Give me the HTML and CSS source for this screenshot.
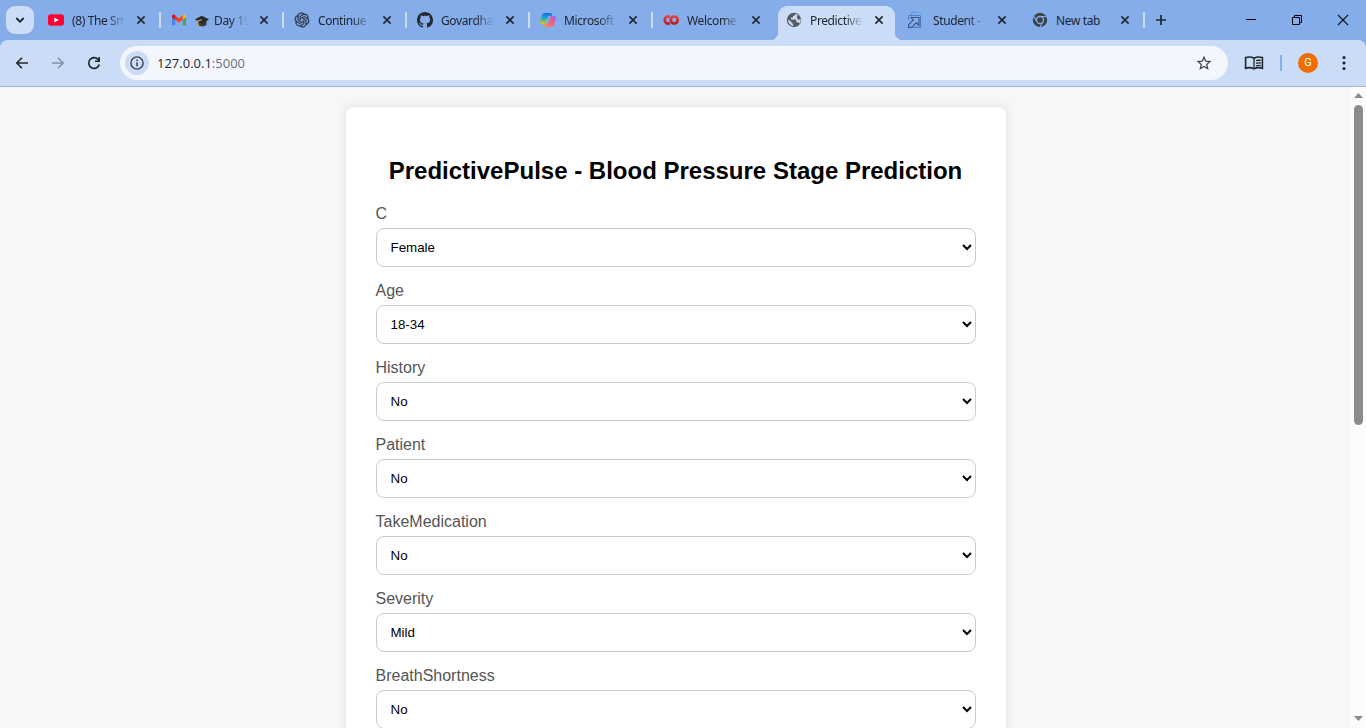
FILE: index.html
```html
<!DOCTYPE html>
<html lang="en">
<head>
<meta charset="utf-8">
<title>PredictivePulse</title>
<link rel="stylesheet" href="styles.css">
</head>
<body>
<svg width="0" height="0" class="defs">
  <symbol id="x" viewBox="0 0 10 10"><path d="M1.4 1.4l7.2 7.2M8.6 1.4L1.4 8.6" stroke="#20262f" stroke-width="1.6" fill="none"/></symbol>
  <linearGradient id="cpA" x1="0" y1="0" x2="0" y2="1"><stop offset="0" stop-color="#1568d8"/><stop offset=".45" stop-color="#20a8d8"/><stop offset=".75" stop-color="#7dc34f"/><stop offset="1" stop-color="#f3c21b"/></linearGradient>
  <linearGradient id="cpB" x1="1" y1="0" x2="0" y2="1"><stop offset="0" stop-color="#a25be8"/><stop offset=".5" stop-color="#f0637f"/><stop offset="1" stop-color="#ff9a4a"/></linearGradient>
  <linearGradient id="co" gradientUnits="userSpaceOnUse" x1="0" y1="3" x2="0" y2="13"><stop offset="0" stop-color="#ee4a44"/><stop offset="1" stop-color="#b3141c"/></linearGradient>
  <linearGradient id="st" x1="0" y1="0" x2="1" y2="0"><stop offset="0" stop-color="#5b8fee"/><stop offset="1" stop-color="#4fc8e8"/></linearGradient>
</svg>
<header class="tabstrip">
  <button class="tab-search"><svg width="10" height="10" viewBox="0 0 10 10"><path d="M1.3 3l3.7 3.7L8.7 3" fill="none" stroke="#1f2530" stroke-width="1.8"/></svg></button>
  <div class="tabs">
    <div class="tab"><svg class="fav" viewBox="0 0 16 16"><rect y="2.3" width="16" height="11.5" rx="3" fill="#ff0033"/><path d="M6.3 5.6v5l4.4-2.5z" fill="#fff"/></svg><span class="title">(8) The Sm</span><svg class="close"><use href="#x"/></svg></div>
    <div class="tab"><svg class="fav" viewBox="0 0 16 16"><path d="M1 4v9.3h3.2V7z" fill="#4285f4"/><path d="M15 4v9.3h-3.2V7z" fill="#34a853"/><path d="M3.9 3.3L8 6.4l4.1-3.1v4.2L8 10.7 3.9 7.5z" fill="#ea4335"/><path d="M1 4.1C1 2.1 2.700 2 4.200 3.300v4.500L1 5.400z" fill="#c5221f"/><path d="M15 4.100c0-2-1.700-2.100-3.200-.8v4.500L15 5.400z" fill="#fbbc04"/></svg><span class="title"><svg class="cap" viewBox="0 0 14 14"><path d="M3 6v4.800c2 2.200 6.500 2.200 8.500 0V6z" fill="#393b3e"/><path d="M0 5.600L6.600 1.800 14 5.300 7.400 9.900z" fill="#26282b"/><path d="M7 5.700l-4.200 1.200v4" fill="none" stroke="#e3a72f" stroke-width="1.100"/><path d="M1.900 9.800h1.800v2.400H1.900z" fill="#e3a72f"/></svg>Day 19</span><svg class="close"><use href="#x"/></svg></div>
    <div class="tab"><svg class="fav" viewBox="-1 -1 26 26"><path fill="#222a38" stroke="#222a38" stroke-width=".3" d="M22.2819 9.8211a5.9847 5.9847 0 0 0-.5157-4.9108 6.0462 6.0462 0 0 0-6.5098-2.9A6.0651 6.0651 0 0 0 4.9807 4.1818a5.9847 5.9847 0 0 0-3.9977 2.9 6.0462 6.0462 0 0 0 .7427 7.0966 5.98 5.98 0 0 0 .511 4.9107 6.051 6.051 0 0 0 6.5146 2.9001A5.9847 5.9847 0 0 0 13.2599 24a6.0557 6.0557 0 0 0 5.7718-4.2058 5.9894 5.9894 0 0 0 3.9977-2.9001 6.0557 6.0557 0 0 0-.7475-7.0729zm-9.022 12.6081a4.4755 4.4755 0 0 1-2.8764-1.0408l.1419-.0804 4.7783-2.7582a.7948.7948 0 0 0 .3927-.6813v-6.7369l2.02 1.1686a.071.071 0 0 1 .038.052v5.5826a4.504 4.504 0 0 1-4.4945 4.4944zm-9.6607-4.1254a4.4708 4.4708 0 0 1-.5346-3.0137l.142.0852 4.783 2.7582a.7712.7712 0 0 0 .7806 0l5.8428-3.3685v2.3324a.0804.0804 0 0 1-.0332.0615L9.74 19.9502a4.4992 4.4992 0 0 1-6.1408-1.6464zM2.3408 7.8956a4.485 4.485 0 0 1 2.3655-1.9728V11.6a.7664.7664 0 0 0 .3879.6765l5.8144 3.3543-2.0201 1.1685a.0757.0757 0 0 1-.071 0l-4.8303-2.7865A4.504 4.504 0 0 1 2.3408 7.872zm16.5963 3.8558L13.1038 8.364 15.1192 7.2a.0757.0757 0 0 1 .071 0l4.8303 2.7913a4.4944 4.4944 0 0 1-.6765 8.1042v-5.6772a.79.79 0 0 0-.407-.667zm2.0107-3.0231l-.142-.0852-4.7735-2.7818a.7759.7759 0 0 0-.7854 0L9.409 9.2297V6.8974a.0662.0662 0 0 1 .0284-.0615l4.8303-2.7866a4.4992 4.4992 0 0 1 6.6802 4.66zM8.3065 12.863l-2.02-1.1638a.0804.0804 0 0 1-.038-.0567V6.0742a4.4992 4.4992 0 0 1 7.3757-3.4537l-.142.0805L8.704 5.459a.7948.7948 0 0 0-.3927.6813zm1.0976-2.3654l2.602-1.4998 2.6069 1.4998v2.9994l-2.5974 1.4997-2.6067-1.4997Z"/></svg><span class="title">Continue o</span><svg class="close"><use href="#x"/></svg></div>
    <div class="tab"><svg class="fav" viewBox="0 0 16 16"><path fill="#23292f" d="M8 0C3.580 0 0 3.580 0 8c0 3.540 2.290 6.530 5.470 7.590.4.070.550-.170.550-.380 0-.190-.010-.820-.010-1.490-2.010.370-2.530-.490-2.690-.940-.090-.230-.480-.940-.820-1.130-.280-.150-.680-.520-.010-.530.630-.010 1.080.580 1.230.820.720 1.210 1.870.870 2.330.660.070-.520.280-.870.510-1.070-1.780-.200-3.640-.890-3.640-3.950 0-.870.310-1.590.820-2.150-.080-.200-.360-1.020.080-2.120 0 0 .670-.210 2.200.820.640-.180 1.320-.270 2-.270s1.360.090 2 .270c1.530-1.040 2.200-.820 2.200-.820.440 1.100.160 1.920.080 2.120.510.560.820 1.270.820 2.150 0 3.070-1.870 3.750-3.650 3.950.290.250.540.730.540 1.480 0 1.070-.010 1.930-.010 2.200 0 .210.150.460.550.380A8 8 0 0 0 16 8c0-4.420-3.580-8-8-8z"/></svg><span class="title">Govardhan</span><svg class="close"><use href="#x"/></svg></div>
    <div class="tab"><svg class="fav" viewBox="0 0 16 16"><path d="M4.700 1h5.500c1 0 1.500.6 1.800 1.500l.5 1.500H9.500c-1 0-1.400.6-1.700 1.500L6 10.300c-.4 1.200-1 1.700-2 1.700H2C.3 12-.2 10.500.2 9L2.100 3C2.500 1.700 3.300 1 4.700 1z" fill="url(#cpA)"/><path d="M11.300 15H5.800c-1 0-1.500-.6-1.800-1.500L3.500 12h3c1 0 1.400-.6 1.700-1.500L10 5.700c.4-1.200 1-1.700 2-1.700h2c1.700 0 2.200 1.500 1.800 3l-1.900 6c-.4 1.300-1.200 2-2.600 2z" fill="url(#cpB)"/></svg><span class="title">Microsoft C</span><svg class="close"><use href="#x"/></svg></div>
    <div class="tab last"><svg class="fav" viewBox="0 0 16 16"><g fill="none" stroke="url(#co)" stroke-width="2.700"><path d="M6.900 4.700A3.600 3.600 0 1 0 6.900 11.100"/><circle cx="11.200" cy="8" r="3.500"/></g></svg><span class="title">Welcome t</span><svg class="close"><use href="#x"/></svg></div>
    <div class="tab active"><svg class="fav" viewBox="0 0 16 16"><circle cx="8" cy="8" r="7.200" fill="#565b62"/><path d="M9.500 1.700c-.2 1.300-.8 2-2.200 2.100L6.800 5.500H5v2h4.300c.8 0 1.100.7 1.100 1.400v1.400h1.800l1.400 1.300c1-1.200 1.300-3 .9-4.600l-1.800.9-1.800-1.800V4.300h1.300A6 6 0 0 0 9.500 1.700zM1.900 7.600c0 3.400 2.200 5.700 5.300 6.500v-2.600c-1.200 0-1.800-.7-1.800-1.800z" fill="#cbdcf6"/></svg><span class="title">PredictiveP</span><svg class="close"><use href="#x"/></svg></div>
    <div class="tab last"><svg class="fav student" viewBox="0 0 16 16" fill="none"><path d="M3.500 3V.5h12v12.500H13" stroke="url(#st)"/><path d="M.5 8V3.500h12" stroke="#4f82d6"/><path d="M3 5.500h8v8L8.300 10.800l-4.500 4.600H.6v-2.600L5.300 8z" stroke="#3d5484" stroke-width="1.100"/><path d="M12.500 3.500v11.900H5" stroke="#4876c4"/></svg><span class="title">Student -</span><svg class="close"><use href="#x"/></svg></div>
    <div class="tab"><svg class="fav" viewBox="0 0 16 16"><circle cx="8" cy="8" r="7.200" fill="#3c4249"/><circle cx="8" cy="8" r="3.500" fill="#3c4249" stroke="#85ade9" stroke-width="1.300"/><path d="M8 4.500h6.200M5 9.700L1.900 4.400M11 9.700L8 15" stroke="#85ade9" stroke-width="1.100"/></svg><span class="title">New tab</span><svg class="close"><use href="#x"/></svg></div>
  </div>
  <svg class="plus" width="12" height="12" viewBox="0 0 12 12"><path d="M6 1v10M1 6h10" stroke="#20262f" stroke-width="1.700"/></svg>
  <div class="window-buttons">
    <svg width="12" height="12" viewBox="0 0 12 12"><path d="M1 5.500h10" stroke="#000"/></svg>
    <svg width="12" height="12" viewBox="0 0 12 12"><path d="M1.500 3.500h7v7h-7zM3.500 3.500v-2h7v7h-2" fill="none" stroke="#000"/></svg>
    <svg width="12" height="12" viewBox="0 0 12 12"><path d="M1 1l10 10M11 1L1 11" stroke="#111" stroke-width="1.100"/></svg>
  </div>
</header>
<nav class="toolbar">
  <div class="nav-buttons">
    <svg viewBox="0 0 16 16"><path d="M14 8H3M8 2.800L2.800 8 8 13.200" fill="none" stroke="#20262f" stroke-width="1.600"/></svg>
    <svg viewBox="0 0 16 16"><path d="M2 8h11M8 2.800L13.200 8 8 13.200" fill="none" stroke="#8793a8" stroke-width="1.600"/></svg>
    <svg viewBox="0 0 16 16"><path d="M13.300 9.500A5.400 5.400 0 1 1 12.500 4.900" fill="none" stroke="#20262f" stroke-width="1.700"/><path d="M14 2v5H9V5.400h3.300V2z" fill="#20262f"/></svg>
  </div>
  <div class="omnibox">
    <span class="site-info"><svg width="16" height="16" viewBox="0 0 16 16"><circle cx="8" cy="8" r="6.100" fill="none" stroke="#3a414c" stroke-width="1.400"/><path d="M8 7.200v4M8 4.500v1.500" stroke="#3a414c" stroke-width="1.500"/></svg></span>
    <span class="url">127.0.0.1<i>:5000</i></span>
    <svg class="star" width="16" height="16" viewBox="0 0 16 16"><path d="M8 2.200l1.700 3.900 4.300.4-3.300 2.900 1 4.200L8 11.400l-3.700 2.200 1-4.200L2 6.500l4.300-.4z" fill="none" stroke="#444b56" stroke-width="1.300"/></svg>
  </div>
  <svg class="reader" width="20" height="16" viewBox="0 0 20 16"><path d="M10 3.300C7.500 1.800 4 1.800 1.600 2.600v10.700c2.400-.9 5.900-.9 8.400.6 2.500-1.500 6-1.500 8.400-.6V2.600C16 1.800 12.500 1.800 10 3.300z" fill="none" stroke="#20262f" stroke-width="1.600"/><path d="M10 3.300v10.600M12 5.700c1.500-.5 3-.6 4.800-.3M12 8.300c1.500-.5 3-.6 4.800-.3M12 10.900c1.500-.5 3-.6 4.800-.3" fill="none" stroke="#20262f" stroke-width="1.300"/></svg>
  <span class="separator"></span>
  <span class="avatar">G</span>
  <svg class="menu" width="4" height="16" viewBox="0 0 4 16" fill="#20262f"><circle cx="2" cy="2.500" r="1.600"/><circle cx="2" cy="8" r="1.600"/><circle cx="2" cy="13.500" r="1.600"/></svg>
</nav>
<main class="viewport">
  <div class="page">
    <form class="card">
      <h2>PredictivePulse - Blood Pressure Stage Prediction</h2>
      <label>C</label><select><option>Female</option></select>
      <label>Age</label><select><option>18-34</option></select>
      <label>History</label><select><option>No</option></select>
      <label>Patient</label><select><option>No</option></select>
      <label>TakeMedication</label><select><option>No</option></select>
      <label>Severity</label><select><option>Mild</option></select>
      <label>BreathShortness</label><select><option>No</option></select>
    </form>
  </div>
  <div class="scrollbar">
    <svg width="9" height="5" viewBox="0 0 9 5"><path d="M0 5L4.500 0 9 5z" fill="#8b8b8b"/></svg>
    <span class="thumb"></span>
    <svg width="9" height="5" viewBox="0 0 9 5"><path d="M0 0L4.500 5 9 0z" fill="#8b8b8b"/></svg>
  </div>
</main>
</body>
</html>
```
FILE: styles.css
```css
* { box-sizing: border-box; }
body { margin: 0; width: 1366px; height: 728px; overflow: hidden; background: #85ade9; font-family: "Liberation Sans", Arial, sans-serif; }
svg { display: block; flex: none; }
.defs { position: absolute; }
.tabstrip { display: flex; height: 40px; align-items: center; font: 12px "Noto Sans", "Open Sans", sans-serif; color: #20262f; }
.tab-search { width: 28px; height: 28px; margin: 0 4px 0 6px; padding: 0; border: 0; border-radius: 9px; background: #cbdcf6; display: flex; align-items: center; justify-content: center; }
.tabs { display: flex; height: 40px; }
.tab { position: relative; width: 123px; height: 40px; padding-left: 10px; display: flex; align-items: center; }
.tab::after { content: ""; width: 2px; height: 16px; margin-left: 13px; background: #cbdcf6; }
.tab.last::after, .tab.active::after { visibility: hidden; }
.fav { width: 16px; height: 16px; z-index: 1; }
.student { position: relative; left: -1px; }
.title { z-index: 1; display: flex; align-items: center; width: 53px; margin: 1px 11px 0 8px; overflow: hidden; white-space: nowrap; letter-spacing: -.38px; -webkit-mask-image: linear-gradient(90deg, #000 66%, transparent 100%); }
.tab:last-child .title { -webkit-mask-image: none; }
.cap { width: 14px; height: 14px; margin-right: 5px; }
.close { width: 10px; height: 10px; z-index: 1; }
.tab.active::before { content: ""; position: absolute; left: -6px; top: 6px; width: 133px; height: 34px; background: radial-gradient(circle at 0 26px, transparent 8px, #cbdcf6 8.5px) 0 0 / 8px 34px no-repeat, radial-gradient(circle at 8px 26px, transparent 8px, #cbdcf6 8.5px) 125px 0 / 8px 34px no-repeat, radial-gradient(#cbdcf6, #cbdcf6) 8px 10px / 117px 24px no-repeat, radial-gradient(#cbdcf6, #cbdcf6) 18px 0 / 97px 10px no-repeat, radial-gradient(circle at 10px 10px, #cbdcf6 9.8px, transparent 10.3px) 8px 0 / 10px 10px no-repeat, radial-gradient(circle at 0 10px, #cbdcf6 9.8px, transparent 10.3px) 115px 0 / 10px 10px no-repeat; clip-path: polygon(8px 0, 125px 0, 125px 26px, 133px 26px, 133px 34px, 0 34px, 0 26px, 8px 26px); }
.plus { margin-left: 10px; }
.window-buttons { display: flex; gap: 34px; margin: 0 17px 0 auto; }
.toolbar { display: flex; align-items: center; height: 47px; background: #cbdcf6; border-bottom: 1px solid #a4b2d2; border-radius: 8px 8px 0 0; }
.nav-buttons { display: flex; gap: 20px; margin: 0 18px 0 14px; }
.nav-buttons svg { width: 16px; height: 16px; }
.omnibox { display: flex; align-items: center; width: 1108px; height: 34px; padding: 0 16px 0 5px; border-radius: 17px; background: #f3f7fd; }
.site-info { width: 24px; height: 24px; display: flex; align-items: center; justify-content: center; border-radius: 50%; background: #cbdcf6; }
.url { margin-left: 8px; font: 13px "Open Sans", sans-serif; color: #20262f; }
.url i { font-style: normal; color: #69707c; }
.star { margin-left: auto; }
.reader { margin-left: 16px; }
.separator { width: 2px; height: 16px; margin: 0 16px; background: #85ade9; }
.avatar { width: 20px; height: 20px; border-radius: 50%; background: #ef6c00; color: #fff; text-align: center; font: 11px/20px Roboto, sans-serif; }
.menu { margin-left: 24px; }
.viewport { display: flex; height: 641px; background: #f7f7f7; }
.page { flex: 1; height: 641px; padding-top: 20px; overflow: hidden; }
.card { width: 660px; height: 900px; margin: 0 auto; padding: 30px; border-radius: 8px; background: #fff; box-shadow: 0 0 12px rgba(0, 0, 0, .1); }
h2 { margin: 20px 0; font-size: 24px; line-height: 28px; text-align: center; white-space: nowrap; }
label { display: block; height: 18px; margin-bottom: 5px; font-size: 16px; line-height: 18px; color: #555; }
select { display: block; width: 600px; height: 39px; margin: 0 0 15px; padding: 10px; border: 1px solid #ccc; border-radius: 8px; background: #fff; color: #000; font: 13.333px "Liberation Sans", Arial, sans-serif; }
.scrollbar { width: 15px; padding: 6px 0 7px; display: flex; flex-direction: column; align-items: center; background: #fcfcfc; }
.thumb { width: 9px; height: 320px; margin: 7px 0 auto; border-radius: 5px; background: #8b8b8b; }
```
